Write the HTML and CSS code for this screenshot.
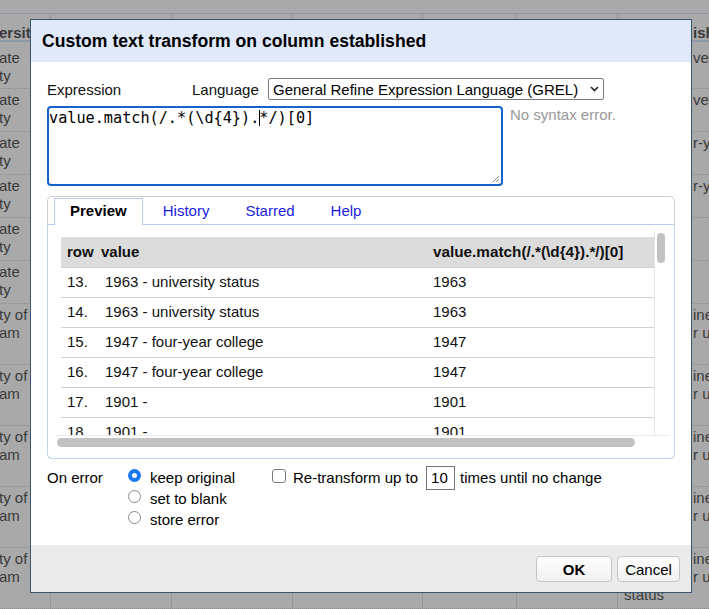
FILE: index.html
```html
<!DOCTYPE html>
<html>
<head>
<meta charset="utf-8">
<link rel="stylesheet" href="styles.css">
</head>
<body>
<div class="sheet">
  <div class="srow shead">
    <div class="c c1"><b>ersity</b></div><div class="c"></div><div class="c"></div><div class="c"></div><div class="c"></div><div class="c"></div><div class="c cr"><b class="frag">ish</b></div>
  </div>
  <div class="srow r-first"><div class="c c1">ate<br>ty</div><div class="c"></div><div class="c"></div><div class="c"></div><div class="c"></div><div class="c"></div><div class="c cr"><div class="frag">ver</div></div></div>
  <div class="srow r2"><div class="c c1">ate<br>ty</div><div class="c"></div><div class="c"></div><div class="c"></div><div class="c"></div><div class="c"></div><div class="c cr"><div class="frag">ver</div></div></div>
  <div class="srow r2"><div class="c c1">ate<br>ty</div><div class="c"></div><div class="c"></div><div class="c"></div><div class="c"></div><div class="c"></div><div class="c cr"><div class="frag">r-y</div></div></div>
  <div class="srow r2"><div class="c c1">ate<br>ty</div><div class="c"></div><div class="c"></div><div class="c"></div><div class="c"></div><div class="c"></div><div class="c cr"><div class="frag">r-y</div></div></div>
  <div class="srow r2"><div class="c c1">ate<br>ty</div><div class="c"></div><div class="c"></div><div class="c"></div><div class="c"></div><div class="c"></div><div class="c cr"></div></div>
  <div class="srow r2"><div class="c c1">ate<br>ty</div><div class="c"></div><div class="c"></div><div class="c"></div><div class="c"></div><div class="c"></div><div class="c cr"></div></div>
  <div class="srow r3"><div class="c c1">ty of<br>am</div><div class="c"></div><div class="c"></div><div class="c"></div><div class="c"></div><div class="c"></div><div class="c cr"><div class="frag">ine</div><div class="frag">r u</div><div>status</div></div></div>
  <div class="srow r3"><div class="c c1">ty of<br>am</div><div class="c"></div><div class="c"></div><div class="c"></div><div class="c"></div><div class="c"></div><div class="c cr"><div class="frag">ine</div><div class="frag">r u</div><div>status</div></div></div>
  <div class="srow r3"><div class="c c1">ty of<br>am</div><div class="c"></div><div class="c"></div><div class="c"></div><div class="c"></div><div class="c"></div><div class="c cr"><div class="frag">ine</div><div class="frag">r u</div><div>status</div></div></div>
  <div class="srow r3"><div class="c c1">ty of<br>am</div><div class="c"></div><div class="c"></div><div class="c"></div><div class="c"></div><div class="c"></div><div class="c cr"><div class="frag">ine</div><div class="frag">r u</div><div>status</div></div></div>
  <div class="srow r3"><div class="c c1">ty of<br>am</div><div class="c"></div><div class="c"></div><div class="c"></div><div class="c"></div><div class="c"></div><div class="c cr"><div class="frag">ine</div><div class="frag">r u</div><div>status</div></div></div>
  <div class="srow r-last"><div class="c c1"></div><div class="c"></div><div class="c"></div><div class="c"></div><div class="c"></div><div class="c"></div><div class="c cr"></div></div>
</div>

<div class="dialog">
  <div class="dlg-head">Custom text transform on column established</div>
  <div class="dlg-body">
    <div class="expr-row">
      <span class="lbl-expr">Expression</span>
      <span class="lbl-lang">Language</span>
      <div class="select">
        <span>General Refine Expression Language (GREL)</span>
        <svg class="chev" width="9" height="6" viewBox="0 0 9 6"><path d="M1 1 L4.5 4.5 L8 1" fill="none" stroke="#222" stroke-width="1.6"/></svg>
      </div>
    </div>
    <div class="editor-row">
      <div class="editor">value.match(/.*(\d{4}).<span class="caret"></span>*/)[0]<svg class="grip" width="8" height="8" viewBox="0 0 8 8"><path d="M1 7 L7 1 M4 7 L7 4" stroke="#888" stroke-width="1"/></svg></div>
      <div class="status">No syntax error.</div>
    </div>
    <div class="tabs">
      <div class="tab-bar">
        <span class="tab active">Preview</span>
        <span class="tab">History</span>
        <span class="tab">Starred</span>
        <span class="tab">Help</span>
      </div>
      <div class="tab-body">
        <div class="scroller">
          <div class="viewport">
            <table class="preview">
              <thead>
                <tr><th class="col-row">row</th><th class="col-val">value</th><th class="col-res">value.match(/.*(\d{4}).*/)[0]</th></tr>
              </thead>
              <tbody>
                <tr><td>13.</td><td class="v">1963 - university status</td><td>1963</td></tr>
                <tr><td>14.</td><td class="v">1963 - university status</td><td>1963</td></tr>
                <tr><td>15.</td><td class="v">1947 - four-year college</td><td>1947</td></tr>
                <tr><td>16.</td><td class="v">1947 - four-year college</td><td>1947</td></tr>
                <tr><td>17.</td><td class="v">1901 -</td><td>1901</td></tr>
                <tr><td>18.</td><td class="v">1901 -</td><td>1901</td></tr>
              </tbody>
            </table>
          </div>
          <div class="vbar"><span class="vthumb"></span></div>
          <div class="hbar"><span class="hthumb"></span></div>
        </div>
      </div>
    </div>
    <div class="options">
      <div class="opt-label">On error</div>
      <div class="radios">
        <div class="ropt"><span class="radio checked"></span><span>keep original</span></div>
        <div class="ropt"><span class="radio"></span><span>set to blank</span></div>
        <div class="ropt"><span class="radio"></span><span>store error</span></div>
      </div>
      <div class="repeat">
        <span class="checkbox"></span><span class="rep-text">Re-transform up to</span><span class="num">10</span><span class="rep-after">times until no change</span>
      </div>
    </div>
  </div>
  <div class="dlg-foot">
    <button class="btn btn-ok">OK</button>
    <button class="btn btn-cancel">Cancel</button>
  </div>
</div>
</body>
</html>
```

FILE: styles.css
```css
* { box-sizing: border-box; }
html, body { margin: 0; padding: 0; }
body {
  width: 709px;
  height: 609px;
  overflow: hidden;
  position: relative;
  background: #a9a9a9;
  font-family: "Liberation Sans", Arial, sans-serif;
  font-size: 15px;
  color: #111;
}

/* background spreadsheet */
.sheet { padding-top: 13px; color: #3a3a3a; line-height: 18px; }
.srow {
  display: grid;
  grid-template-columns: 50px 121px 121px 130px 94px 101px 92px;
}
.c { border-left: 1px solid #969696; overflow: hidden; white-space: nowrap; }
.c1 { border-left: none; margin-left: -1px; }
.cr { padding-left: 6px; }
.frag { padding-left: 69px; }
.shead {
  height: 29px;
  border-top: 1px solid #8d97a6;
  border-bottom: 2px solid #8d97a6;
}
.shead .c { padding-top: 10px; }
.r-first { height: 47px; border-bottom: 1px dotted #8c8c8c; }
.r-first .c { padding-top: 7px; }
.r2 { height: 43px; border-bottom: 1px dotted #8c8c8c; }
.r2 .c { padding-top: 2px; }
.r3 { height: 61px; border-bottom: 1px dotted #8c8c8c; }
.r3 .c { padding-top: 2px; }
.r-last { height: 4px; }

/* dialog */
.dialog {
  position: absolute;
  left: 30px;
  top: 19px;
  width: 662px;
  height: 574px;
  border: 1px solid #3c5570;
  background: #fff;
  display: flex;
  flex-direction: column;
}
.dlg-head {
  height: 42px;
  line-height: 42px;
  background: #dfe9fa;
  padding-left: 11px;
  font-weight: bold;
  font-size: 17.6px;
  color: #000;
}
.dlg-body {
  height: 483px;
  padding: 16px 0 0 16px;
}
.dlg-foot {
  flex: 1;
  background: #ebebeb;
  display: flex;
  justify-content: flex-end;
  align-items: flex-start;
  gap: 5px;
  padding: 11px 11px 0 0;
}

.expr-row { display: flex; align-items: center; height: 22px; }
.lbl-expr { width: 145px; }
.lbl-lang { width: 76px; }
.select {
  width: 336px;
  height: 22px;
  border: 1px solid #7a7a7a;
  border-radius: 2px;
  display: flex;
  align-items: center;
  justify-content: space-between;
  padding: 0 4px 0 4px;
  color: #000;
}

.editor-row { display: flex; margin-top: 6px; align-items: flex-start; }
.editor {
  position: relative;
  width: 456px;
  height: 80px;
  border: 2px solid #1463cf;
  border-radius: 4px;
  padding: 1px 0 0 0;
  font-family: "DejaVu Sans Mono", "Liberation Mono", monospace;
  font-size: 15.2px;
  line-height: 18px;
  color: #000;
  white-space: pre;
}
.caret {
  display: inline-block;
  width: 1px;
  height: 16px;
  background: #000;
  margin-right: -1px;
  vertical-align: -3px;
}
.grip { position: absolute; right: 1px; bottom: 1px; }
.status { margin-left: 7px; color: #999; line-height: 17px; }

.tabs {
  margin-top: 10px;
  width: 628px;
  height: 263px;
  border: 1px solid #cfcfcf;
  border-radius: 5px;
  padding-top: 1px;
  display: flex;
  flex-direction: column;
}
.tab-bar {
  display: flex;
  height: 27px;
  padding-left: 6px;
  border-bottom: 1px solid #b7cbf1;
}
.tab {
  height: 27px;
  line-height: 24px;
  padding: 0 15px;
  margin-right: 4px;
  border: 1px solid transparent;
  border-bottom: none;
  color: #1c1ce0;
}
.tab.active {
  border-color: #b7cbf1;
  background: #fff;
  color: #000;
  font-weight: bold;
  margin-bottom: -1px;
}
.tab-body {
  flex: 1;
  margin: 0 -1px -1px;
  border: 1px solid #c3d3f2;
  border-top: none;
  border-radius: 0 0 5px 5px;
  padding: 6px 5px 0 8px;
}
.scroller {
  display: grid;
  grid-template-columns: 598px 14px;
  grid-template-rows: 204px 14px;
}
.viewport { overflow: hidden; padding: 6px 0 0 5px; }
.preview { border-collapse: collapse; width: 593px; table-layout: fixed; }
.preview th {
  background: #dcdcdc;
  height: 30px;
  text-align: left;
  font-weight: bold;
  padding: 0 0 0 6px;
  border-bottom: 1px solid #cfcfcf;
  color: #111;
  white-space: nowrap;
}
.preview th.col-row { width: 38px; }
.preview th.col-val { width: 328px; padding-left: 2px; }
.preview th.col-res { font-size: 15.3px; }
.preview td {
  height: 30px;
  padding: 0 0 1px 6px;
  border-bottom: 1px solid #d0d0d0;
  white-space: nowrap;
}
.vbar {
  border-left: 1px solid #e4e4e4;
  padding: 2px 0 0 2px;
}
.vthumb { display: block; width: 8px; height: 30px; border-radius: 4px; background: #c2c2c2; }
.hbar {
  grid-column: 1 / 3;
  border-top: 1px solid #ececec;
  padding: 2px 0 0 1px;
}
.hthumb { display: block; width: 578px; height: 9px; border-radius: 5px; background: #c2c2c2; }

.options { display: flex; margin-top: 8px; line-height: 21px; color: #000; }
.opt-label { width: 81px; }
.radios { width: 144px; }
.ropt { display: flex; align-items: center; height: 21px; }
.radio {
  width: 13px;
  height: 13px;
  border-radius: 50%;
  border: 1px solid #8a8a8a;
  background: #fff;
  margin: 0 9px 4px 0;
}
.radio.checked { border: 4px solid #1b78f5; }
.repeat { display: flex; align-items: center; height: 21px; }
.checkbox {
  width: 14px;
  height: 14px;
  border: 1px solid #7c7c7c;
  border-radius: 3px;
  background: #fff;
  margin: 0 7px 4px 0;
}
.rep-text { margin-right: 8px; }
.num {
  width: 29px;
  height: 24px;
  line-height: 22px;
  border: 1px solid #767676;
  padding-left: 4px;
}
.rep-after { margin-left: 5px; }

.btn {
  height: 26px;
  border: 1px solid #c4c4c4;
  border-radius: 4px;
  background: linear-gradient(#fefefe, #f1f1f1);
  font-family: "Liberation Sans", Arial, sans-serif;
  font-size: 15px;
  color: #000;
  padding: 0 7px;
}
.btn-ok { width: 76px; font-weight: bold; }
.btn-cancel { width: 63px; }
```
